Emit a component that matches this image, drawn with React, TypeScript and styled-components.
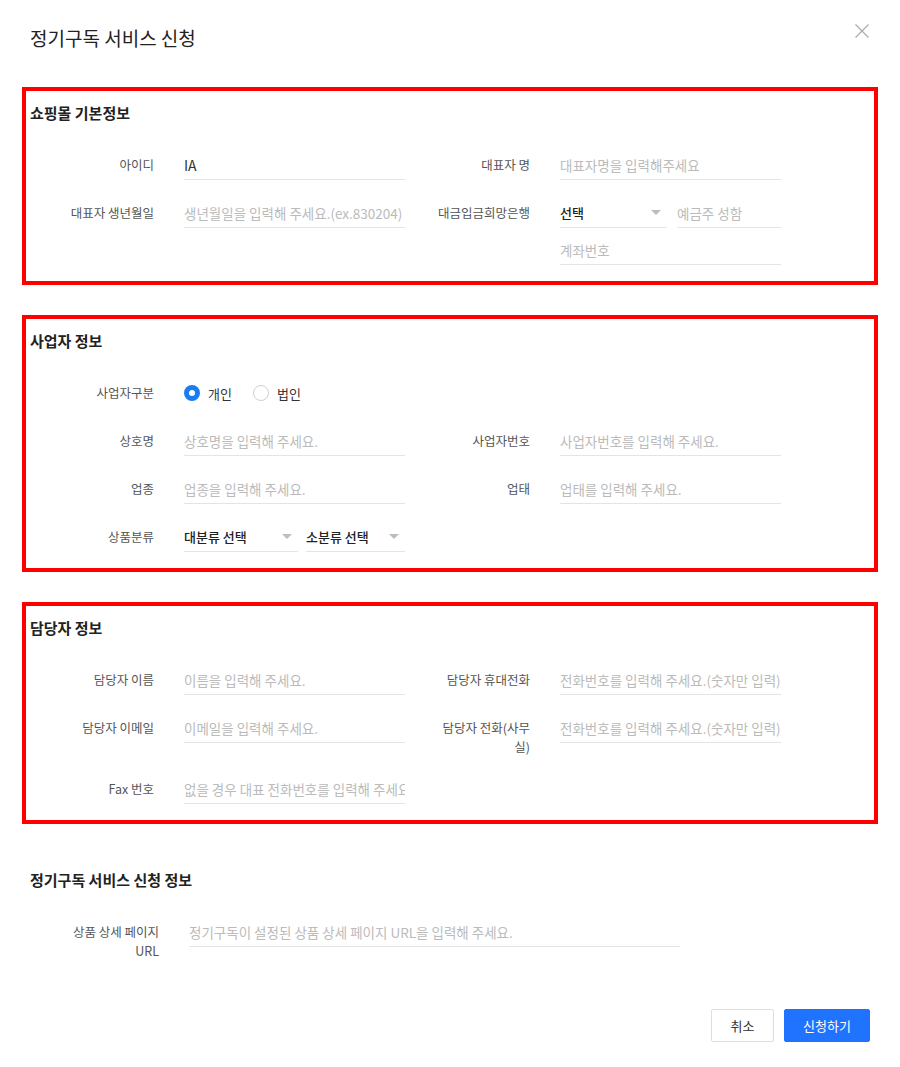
import styled, { createGlobalStyle } from 'styled-components';

const GlobalStyle = createGlobalStyle`
  * { box-sizing: border-box; }
  body {
    margin: 0;
    background: #fff;
    font-family: "Noto Sans CJK KR", "Noto Sans", "Liberation Sans", sans-serif;
    color: #333;
  }
`;

const Modal = styled.div`
  width: 900px;
  min-height: 1067px;
  padding: 25px 0 0;
  background: #fff;
`;

const Header = styled.div`
  display: flex;
  justify-content: space-between;
  align-items: flex-start;
  padding: 0 30px;
  height: 26px;
  margin-bottom: 36px;
`;

const Title = styled.h1`
  margin: 0;
  font-size: 19px;
  line-height: 26px;
  font-weight: 400;
  color: #222;
`;

const CloseButton = styled.button`
  border: none;
  background: none;
  padding: 0;
  margin-top: -2px;
  width: 16px;
  height: 16px;
  cursor: pointer;
`;

const Section = styled.section<{ $outlined?: boolean }>`
  margin: 0 22px 30px;
  padding: 12px 4px 16px;
  border: 4px solid ${(p) => (p.$outlined ? '#ff0000' : 'transparent')};
`;

const SectionTitle = styled.h2`
  margin: 0 0 27px;
  font-size: 15px;
  line-height: 20px;
  font-weight: 700;
  color: #222;
`;

const Grid = styled.div`
  display: grid;
  grid-template-columns: 375px 375px;
  column-gap: 1px;
  row-gap: 18px;
`;

const Field = styled.div`
  display: flex;
  align-items: flex-start;
`;

const Label = styled.label<{ $width?: number }>`
  flex: none;
  width: ${(p) => p.$width ?? 124}px;
  margin-right: 30px;
  padding: 5px 0 0 28px;
  line-height: 19px;
  font-size: 12.5px;
  color: #555;
  text-align: right;
`;

const Controls = styled.div<{ $width?: number }>`
  width: ${(p) => p.$width ?? 221}px;
  display: flex;
  flex-direction: column;
  gap: 7px;
`;

const Line = styled.div<{ $gap?: number }>`
  display: flex;
  gap: ${(p) => p.$gap ?? 10}px;
`;

const TextInput = styled.input<{ $value?: boolean }>`
  width: 100%;
  height: 30px;
  padding: 0;
  border: none;
  border-bottom: 1px solid #e4e4e4;
  outline: none;
  background: transparent;
  font-family: inherit;
  font-size: ${(p) => (p.$value ? 14 : 13.5)}px;
  color: #333;
  &::placeholder {
    color: #bbb;
  }
`;

const SelectBox = styled.div<{ $width: number }>`
  flex: none;
  width: ${(p) => p.$width}px;
  height: 30px;
  display: flex;
  align-items: center;
  justify-content: space-between;
  padding-right: 6px;
  border-bottom: 1px solid #e4e4e4;
  font-size: 13px;
  font-weight: 500;
  color: #222;
`;

const Caret = styled.span`
  width: 0;
  height: 0;
  border-left: 5px solid transparent;
  border-right: 5px solid transparent;
  border-top: 5px solid #bdbdbd;
`;

const RadioGroup = styled.div`
  height: 30px;
  display: flex;
  align-items: center;
  gap: 21px;
`;

const RadioItem = styled.span`
  display: flex;
  align-items: center;
  gap: 8px;
  font-size: 13px;
  color: #333;
`;

const RadioDot = styled.span<{ $checked?: boolean }>`
  width: 16px;
  height: 16px;
  border-radius: 50%;
  background: #fff;
  border: ${(p) => (p.$checked ? '5px solid #1a7cf3' : '1px solid #d0d0d0')};
`;

const Footer = styled.div`
  display: flex;
  justify-content: flex-end;
  gap: 10px;
  margin-top: -1px;
  padding: 0 30px;
`;

const Button = styled.button<{ $primary?: boolean }>`
  height: 33px;
  padding: 0;
  width: ${(p) => (p.$primary ? 86 : 63)}px;
  border-radius: 2px;
  border: 1px solid ${(p) => (p.$primary ? '#1f73ff' : '#dedede')};
  background: ${(p) => (p.$primary ? '#1f73ff' : '#fff')};
  color: ${(p) => (p.$primary ? '#fff' : '#333')};
  font-family: inherit;
  font-size: 13px;
  cursor: pointer;
`;

const Select = ({ value, width }: { value: string; width: number }) => (
  <SelectBox $width={width}>
    <span>{value}</span>
    <Caret />
  </SelectBox>
);

const App = () => (
  <Modal>
    <GlobalStyle />
    <Header>
      <Title>정기구독 서비스 신청</Title>
      <CloseButton aria-label="닫기">
        <svg width="16" height="16" viewBox="0 0 16 16">
          <path d="M1.5 1.5 L14.5 14.5 M14.5 1.5 L1.5 14.5" stroke="#a8a8a8" strokeWidth="1.1" fill="none" />
        </svg>
      </CloseButton>
    </Header>

    <Section $outlined>
      <SectionTitle>쇼핑몰 기본정보</SectionTitle>
      <Grid>
        <Field>
          <Label>아이디</Label>
          <Controls>
            <TextInput $value defaultValue="IA" />
          </Controls>
        </Field>
        <Field>
          <Label>대표자 명</Label>
          <Controls>
            <TextInput placeholder="대표자명을 입력해주세요" />
          </Controls>
        </Field>
        <Field>
          <Label>대표자 생년월일</Label>
          <Controls>
            <TextInput placeholder="생년월일을 입력해 주세요.(ex.830204)" />
          </Controls>
        </Field>
        <Field>
          <Label>대금입금희망은행</Label>
          <Controls>
            <Line>
              <Select value="선택" width={107} />
              <TextInput placeholder="예금주 성함" />
            </Line>
            <TextInput placeholder="계좌번호" />
          </Controls>
        </Field>
      </Grid>
    </Section>

    <Section $outlined>
      <SectionTitle>사업자 정보</SectionTitle>
      <Grid>
        <Field>
          <Label>사업자구분</Label>
          <RadioGroup>
            <RadioItem>
              <RadioDot $checked />
              개인
            </RadioItem>
            <RadioItem>
              <RadioDot />
              법인
            </RadioItem>
          </RadioGroup>
        </Field>
        <div />
        <Field>
          <Label>상호명</Label>
          <Controls>
            <TextInput placeholder="상호명을 입력해 주세요." />
          </Controls>
        </Field>
        <Field>
          <Label>사업자번호</Label>
          <Controls>
            <TextInput placeholder="사업자번호를 입력해 주세요." />
          </Controls>
        </Field>
        <Field>
          <Label>업종</Label>
          <Controls>
            <TextInput placeholder="업종을 입력해 주세요." />
          </Controls>
        </Field>
        <Field>
          <Label>업태</Label>
          <Controls>
            <TextInput placeholder="업태를 입력해 주세요." />
          </Controls>
        </Field>
        <Field>
          <Label>상품분류</Label>
          <Controls>
            <Line $gap={8}>
              <Select value="대분류 선택" width={114} />
              <Select value="소분류 선택" width={99} />
            </Line>
          </Controls>
        </Field>
      </Grid>
    </Section>

    <Section $outlined>
      <SectionTitle>담당자 정보</SectionTitle>
      <Grid>
        <Field>
          <Label>담당자 이름</Label>
          <Controls>
            <TextInput placeholder="이름을 입력해 주세요." />
          </Controls>
        </Field>
        <Field>
          <Label>담당자 휴대전화</Label>
          <Controls>
            <TextInput placeholder="전화번호를 입력해 주세요.(숫자만 입력)" />
          </Controls>
        </Field>
        <Field>
          <Label>담당자 이메일</Label>
          <Controls>
            <TextInput placeholder="이메일을 입력해 주세요." />
          </Controls>
        </Field>
        <Field>
          <Label>담당자 전화(사무실)</Label>
          <Controls>
            <TextInput placeholder="전화번호를 입력해 주세요.(숫자만 입력)" />
          </Controls>
        </Field>
        <Field>
          <Label>Fax 번호</Label>
          <Controls>
            <TextInput placeholder="없을 경우 대표 전화번호를 입력해 주세요." />
          </Controls>
        </Field>
      </Grid>
    </Section>

    <Section>
      <SectionTitle>정기구독 서비스 신청 정보</SectionTitle>
      <Field>
        <Label $width={129}>상품 상세 페이지 URL</Label>
        <Controls $width={491}>
          <TextInput placeholder="정기구독이 설정된 상품 상세 페이지 URL을 입력해 주세요." />
        </Controls>
      </Field>
    </Section>

    <Footer>
      <Button>취소</Button>
      <Button $primary>신청하기</Button>
    </Footer>
  </Modal>
);

export default App;
